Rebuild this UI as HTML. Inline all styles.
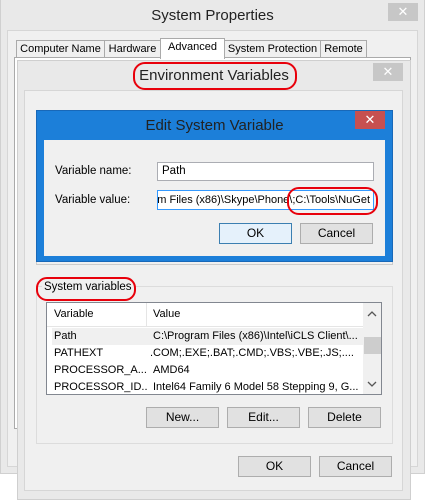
<!DOCTYPE html>
<html><head><style>
*{box-sizing:border-box;margin:0;padding:0}
body{width:425px;height:496px;background:#fff;position:relative;overflow:hidden;font-family:"Liberation Sans",sans-serif;font-size:11.5px;color:#000;white-space:nowrap}
.a{position:absolute}
.btn{position:absolute;border:1px solid #adadad;background:#e1e1e1;text-align:center;line-height:19px;font-size:12px}
.cls{position:absolute;width:30px;height:18px;background:#c7c7c7;color:#fff;text-align:center;line-height:18px;font-size:13px}
.ell{position:absolute;border:2.5px solid #e8000b;border-radius:12px}
.row{position:absolute;left:0;height:17px;line-height:17px;width:316px;white-space:nowrap;font-size:11px}
.row span{overflow:hidden}
.tab{position:absolute;top:40px;height:18px;border:1px solid #aaa;background:#f0f0f0;line-height:16px;font-size:11px;text-align:center}
</style></head><body>
<!-- System Properties -->
<div class="a" style="left:0;top:0;width:425px;height:474px;background:#e9e9e9;border:1px solid #d0d0d0;border-top:none"></div>
<div class="a" style="left:0;top:7px;width:425px;text-align:center;font-size:15px;color:#222">System Properties</div>
<div class="cls" style="left:388px;top:3px">✕</div>
<div class="a" style="left:7px;top:30px;width:411px;height:437px;background:#f0f0f0;border:1px solid #d6d6d6"></div>
<div class="a" style="left:14px;top:57px;width:397px;height:372px;background:#fff;border:1px solid #aaa"></div>
<div class="tab" style="left:16px;width:89px">Computer Name</div>
<div class="tab" style="left:104px;width:57px">Hardware</div>
<div class="tab" style="left:160px;top:38px;width:65px;height:21px;border-bottom:none;background:#fff">Advanced</div>
<div class="tab" style="left:224px;width:97px">System Protection</div>
<div class="tab" style="left:320px;width:47px">Remote</div>
<!-- Env Vars -->
<div class="a" style="left:17px;top:60px;width:394px;height:440px;background:#e9e9e9;border:1px solid #cfcfcf"></div>
<div class="a" style="left:17px;top:67px;width:394px;text-align:center;font-size:15px;color:#222">Environment Variables</div>
<div class="ell" style="left:133px;top:62px;width:164px;height:28px"></div>
<div class="cls" style="left:373px;top:63px">✕</div>
<div class="a" style="left:24px;top:90px;width:379px;height:401px;background:#f0f0f0;border:1px solid #d6d6d6"></div>
<div class="a" style="left:36px;top:110px;width:357px;height:155px;border:1px solid #ccc"></div>
<!-- group -->
<div class="a" style="left:36px;top:286px;width:357px;height:158px;border:1px solid #dcdcdc"></div>
<div class="a" style="left:42px;top:281px;background:#f0f0f0;padding:0 2px">System variables</div>
<div class="ell" style="left:36px;top:277px;width:100px;height:24px;border-radius:11px"></div>
<div class="a" style="left:46px;top:302px;width:336px;height:93px;background:#fff;border:1px solid #828790;overflow:hidden">
 <div class="a" style="left:0;top:0;width:316px;height:24px;border-bottom:1px solid #e5e5e5;line-height:23px;font-size:11px"><span class="a" style="left:7px">Variable</span><span class="a" style="left:106px">Value</span><span class="a" style="left:99px;top:0;height:24px;border-left:1px solid #e5e5e5"></span></div>
 <div class="row" style="top:25px;background:#f0f0f0;left:5px;width:311px"><span class="a" style="left:2px">Path</span><span class="a" style="left:101px;width:208px">C:\Program Files (x86)\Intel\iCLS Client\...</span></div>
 <div class="row" style="top:42px"><span class="a" style="left:7px">PATHEXT</span><span class="a" style="left:103px;width:210px">.COM;.EXE;.BAT;.CMD;.VBS;.VBE;.JS;....</span></div>
 <div class="row" style="top:59px"><span class="a" style="left:7px;width:92px">PROCESSOR_A...</span><span class="a" style="left:106px">AMD64</span></div>
 <div class="row" style="top:76px"><span class="a" style="left:7px;width:94px">PROCESSOR_ID...</span><span class="a" style="left:106px;width:208px">Intel64 Family 6 Model 58 Stepping 9, G...</span></div>
 <div class="a" style="left:316px;top:0;width:19px;height:92px;background:#f0f0f0"></div>
 <svg class="a" style="left:320px;top:8px" width="10" height="6"><path d="M1 5L5 1L9 5" fill="none" stroke="#555" stroke-width="1.3"/></svg>
 <div class="a" style="left:317px;top:34px;width:17px;height:17px;background:#cdcdcd"></div>
 <svg class="a" style="left:320px;top:78px" width="10" height="6"><path d="M1 1L5 5L9 1" fill="none" stroke="#555" stroke-width="1.3"/></svg>
</div>
<div class="btn" style="left:146px;top:407px;width:73px;height:21px">New...</div>
<div class="btn" style="left:227px;top:407px;width:73px;height:21px">Edit...</div>
<div class="btn" style="left:308px;top:407px;width:73px;height:21px">Delete</div>
<div class="btn" style="left:238px;top:456px;width:73px;height:21px">OK</div>
<div class="btn" style="left:319px;top:456px;width:73px;height:21px">Cancel</div>
<!-- Edit System Variable -->
<div class="a" style="left:36px;top:110px;width:357px;height:152px;background:#1c7fd9;border:1px solid #1868b8"></div>
<div class="a" style="left:36px;top:117px;width:357px;text-align:center;font-size:15px;color:#222">Edit System Variable</div>
<div class="a" style="left:355px;top:111px;width:30px;height:18px;background:#c75050;color:#fff;text-align:center;line-height:18px;font-size:13px">✕</div>
<div class="a" style="left:44px;top:140px;width:341px;height:116px;background:#f0f0f0"></div>
<div class="a" style="left:55px;top:165px">Variable name:</div>
<div class="a" style="left:157px;top:162px;width:217px;height:19px;background:#fff;border:1px solid #abadb3;padding-left:4px;line-height:17px">Path</div>
<div class="a" style="left:55px;top:194px">Variable value:</div>
<div class="a" style="left:157px;top:190px;width:217px;height:20px;background:#fff;border:1px solid #3399ff;line-height:18px;overflow:hidden;font-size:11px"><span class="a" style="right:3px;top:0">Program Files (x86)\Skype\Phone\;C:\Tools\NuGet</span></div>
<div class="ell" style="left:287px;top:187px;width:91px;height:28px"></div>
<div class="btn" style="left:219px;top:223px;width:73px;height:21px;border-color:#3c7fb1;background:#e5f1fb">OK</div>
<div class="btn" style="left:300px;top:223px;width:73px;height:21px">Cancel</div>
</body></html>
